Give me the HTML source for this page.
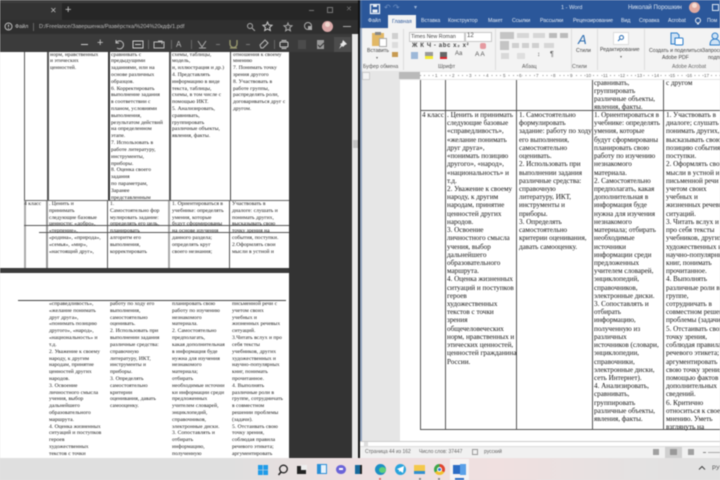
<!DOCTYPE html>
<html lang="ru"><head><meta charset="utf-8">
<style>
html,body{margin:0;padding:0;width:720px;height:480px;overflow:hidden;background:#e6e3e3}
*{box-sizing:border-box}
.a{position:absolute}
.t{position:absolute;white-space:nowrap;font-family:"Liberation Serif","Noto Serif CJK SC",serif;color:#222}
.l{font-size:5.6px;line-height:6.82px;color:#1c1c1c}
.w{font-size:7.15px;line-height:8.22px;color:#111}
.s{position:absolute;white-space:nowrap;font-family:"Liberation Sans","Noto Sans CJK SC",sans-serif}
.tab{font-size:5.2px;top:17.5px;color:#e6ecf5}
.rb{font-size:5.2px;color:#444}
.r{position:absolute;top:73px;font:4.6px "Liberation Sans",sans-serif;color:#666}
.vl{position:absolute;background:#555}
#root{position:absolute;left:0;top:0;width:720px;height:480px;overflow:hidden;filter:blur(.42px)}
</style></head><body><div id="root">

<!-- LEFT: PDF viewer -->
<div class="a" style="left:0;top:0;width:360px;height:458px;background:#333"></div>
<div class="a" style="left:0;top:0;width:360px;height:3px;background:#3d3d3d"></div>
<div class="a" style="left:0;top:3px;width:360px;height:17px;background:#262626"></div>
<div class="a" style="left:0;top:20px;width:360px;height:14px;background:#2f2f2f"></div>
<div class="a" style="left:0;top:34px;width:360px;height:18px;background:#3b3b3b"></div>
<div class="a" style="left:0;top:3px;width:62px;height:17px;background:#333"></div>
<div class="s" style="left:50px;top:6px;font-size:8px;color:#bbb">✕</div>
<div class="s" style="left:65px;top:4px;font-size:11px;color:#ccc">+</div>
<div class="a" style="left:309px;top:10px;width:5px;height:1px;background:#777"></div>
<div class="a" style="left:327px;top:7px;width:6px;height:6px;border:1px solid #777"></div>
<div class="s" style="left:346px;top:5px;font-size:7px;color:#777">✕</div>
<svg class="a" style="left:4px;top:22px" width="9" height="9"><circle cx="4.5" cy="4.5" r="3.5" fill="none" stroke="#bbb"/><path d="M4.5 2.5v2.5M4.5 6v1" stroke="#bbb"/></svg>
<div class="s" style="left:15px;top:23.5px;font-size:5.4px;color:#ccc">Файл</div>
<div class="a" style="left:33px;top:23px;width:1px;height:8px;background:#666"></div>
<div class="s" style="left:39px;top:23.5px;font-size:5.5px;color:#bbb">D:/Freelance/Завершенка/Развёрстка/%204%20кдф/1.pdf</div>
<svg class="a" style="left:246px;top:22px" width="10" height="9"><circle cx="4" cy="4" r="2.5" fill="none" stroke="#aaa"/><path d="M6 6l3 3" stroke="#aaa"/></svg>
<svg class="a" style="left:262px;top:21px" width="11" height="11"><path d="M5.500 1l1.300 3 3.200.3-2.400 2.100.7 3.100-2.800-1.600-2.800 1.600.7-3.100L1 4.300 4.200 4z" fill="none" stroke="#ccc"/></svg>
<svg class="a" style="left:283px;top:21px" width="11" height="11"><path d="M5 2l1 2.500 3 .3-2.300 2 .7 3L5 8.300 2.600 9.800l.7-3-2.300-2 3-.3z" fill="none" stroke="#aaa"/></svg>
<svg class="a" style="left:303px;top:21px" width="11" height="11"><circle cx="5" cy="5" r="3.500" fill="none" stroke="#aaa"/><rect x="5" y="5" width="4" height="4" fill="#aaa"/></svg>
<div class="a" style="left:322px;top:21px;width:11px;height:11px;border-radius:50%;background:#d9a8a8"></div>
<div class="a" style="left:325px;top:22px;width:5px;height:5px;border-radius:50%;background:#f0d8d0"></div>
<div class="a" style="left:343px;top:26px;width:8px;height:1px;background:#aaa"></div>

<div class="a" style="left:81px;top:44px;width:7px;height:1px;background:#ccc"></div>
<div class="s" style="left:97px;top:37px;font-size:11px;color:#ccc">+</div>
<svg class="a" style="left:114px;top:39px" width="11" height="11"><path d="M2 4a4 4 0 1 1 1 5M2 1v3h3" fill="none" stroke="#bbb"/></svg>
<svg class="a" style="left:132px;top:40px" width="12" height="9"><rect x="1" y="1" width="10" height="7" fill="none" stroke="#ccc"/><path d="M3 4.500h6" stroke="#ccc"/></svg>
<div class="a" style="left:148px;top:40px;width:1px;height:9px;background:#666"></div>
<svg class="a" style="left:153px;top:40px" width="12" height="9"><rect x="1" y="2" width="10" height="6" fill="none" stroke="#bbb"/><path d="M5 1h4v3" fill="none" stroke="#bbb"/></svg>
<div class="a" style="left:171px;top:40px;width:1px;height:9px;background:#666"></div>
<div class="s" style="left:176px;top:40px;font-size:8px;color:#bbb">A</div>
<div class="a" style="left:191px;top:40px;width:1px;height:9px;background:#666"></div>
<svg class="a" style="left:197px;top:39px" width="11" height="11"><path d="M1 2l4 6 4-6M2 9h7" fill="none" stroke="#aaa"/></svg>
<div class="a" style="left:216px;top:44px;width:4px;height:1px;background:#777"></div>
<svg class="a" style="left:228px;top:39px" width="11" height="11"><path d="M2 1v4a3.500 3.500 0 0 0 7 0V1M2 9h7" fill="none" stroke="#9a9a70" stroke-width="1.300"/></svg>
<div class="a" style="left:246px;top:44px;width:4px;height:1px;background:#777"></div>
<svg class="a" style="left:258px;top:38px" width="12" height="12"><path d="M2 7l5-5 3 3-5 5H3z" fill="none" stroke="#bbb"/></svg>
<div class="a" style="left:274px;top:40px;width:1px;height:9px;background:#666"></div>
<svg class="a" style="left:278px;top:39px" width="12" height="11"><rect x="2" y="3" width="8" height="5" rx="1" fill="none" stroke="#ccc"/><path d="M3.500 1.500h5M3.500 9.500h5" stroke="#ccc"/></svg>
<div class="a" style="left:298px;top:40px;width:8px;height:9px;background:#4b4b4b"></div>
<svg class="a" style="left:315px;top:39px" width="11" height="11"><rect x="2" y="1" width="7" height="9" fill="#999"/><path d="M3 6l2 2 4-4" stroke="#333" fill="none"/></svg>
<div class="a" style="left:334px;top:37px;width:17px;height:15px;background:#4c4c4c"></div>
<svg class="a" style="left:337px;top:39px" width="11" height="11"><path d="M6 1l4 4-2 1-2 2-1-1-3 3 2-4-1-1 2-1z" fill="#e8e8e8"/></svg>

<!-- pdf page -->
<div class="a" style="left:0;top:52px;width:289px;height:216px;background:#fff"></div>
<div class="a" style="left:0;top:268px;width:289px;height:5px;background:#3a3a3a"></div>
<div class="a" style="left:0;top:273px;width:289px;height:185px;background:#fff"></div>
<div class="a" style="left:352px;top:34px;width:6px;height:424px;background:#e9e9e9"></div>
<div class="a" style="left:353px;top:140px;width:5px;height:8px;background:#c4c4c4"></div>
<div class="a" style="left:358px;top:0;width:2px;height:458px;background:#111"></div>

<div class="vl" style="left:24px;top:52px;width:1px;height:216px;background:#555"></div>
<div class="vl" style="left:24px;top:200px;width:2px;height:68px;background:#aaa"></div>
<div class="vl" style="left:47px;top:52px;width:2px;height:148px;background:#555"></div>
<div class="vl" style="left:46px;top:200px;width:2px;height:68px;background:#999"></div>
<div class="vl" style="left:108px;top:52px;width:2px;height:148px;background:#333"></div>
<div class="vl" style="left:107px;top:200px;width:1px;height:68px;background:#555"></div>
<div class="vl" style="left:169px;top:52px;width:2px;height:148px;background:#555"></div>
<div class="vl" style="left:168px;top:200px;width:2px;height:68px;background:#aaa"></div>
<div class="vl" style="left:230px;top:52px;width:1px;height:148px;background:#444"></div>
<div class="vl" style="left:229px;top:200px;width:1px;height:68px;background:#555"></div>
<div class="vl" style="left:24px;top:200px;width:265px;height:1px;background:#666"></div>
<div class="vl" style="left:24px;top:225px;width:265px;height:1px;background:#555"></div>
<div class="vl" style="left:39px;top:232px;width:250px;height:1px;background:#555"></div>
<div class="vl" style="left:18px;top:300px;width:268px;height:1px;background:#444"></div>

<div class="t l" style="left:50px;top:51.5px;clip-path:inset(.5px 0 0 0)">норм, нравственных<br>и этических<br>ценностей.</div>
<div class="t l" style="left:111px;top:51.5px;clip-path:inset(.5px 0 0 0)">сравнивать с<br>предыдущими<br>заданиями, или на<br>основе различных<br>образцов.<br>6. Корректировать<br>выполнение задания<br>в соответствии с<br>планом, условиями<br>выполнения,<br>результатом действий<br>на определенном<br>этапе.<br>7. Использовать в<br>работе литературу,<br>инструменты,<br>приборы.<br>8. Оценка своего<br>задания<br>по параметрам,<br>Заранее<br>представленным</div>
<div class="t l" style="left:172px;top:51.5px;clip-path:inset(.5px 0 0 0)">схемы, таблицы,<br>модель,<br>и, иллюстрация и др.)<br>4. Представлять<br>информацию в виде<br>текста, таблицы,<br>схемы, в том числе с<br>помощью ИКТ.<br>5. Анализировать,<br>сравнивать,<br>группировать<br>различные объекты,<br>явления, факты.</div>
<div class="t l" style="left:233px;top:51.5px;clip-path:inset(.5px 0 0 0)">отношения к своему<br>мнению<br>7. Понимать точку<br>зрения другого<br>8. Участвовать в<br>работе группы,<br>распределять роли,<br>договариваться друг с<br>другом.</div>

<div class="t l" style="left:24px;top:201px">4 класс</div>
<div class="t l" style="left:49px;top:201px">. Ценить и<br>принимать<br>следующие базовые<br>ценности: «добро»,<br>«терпение»,<br>«родина», «природа»,<br>«семья», «мир»,<br>«настоящий друг»,</div>
<div class="t l" style="left:110px;top:201px">1.<br>Самостоятельно фор<br>мулировать задание:<br>определять его цель,<br>планировать<br>алгоритм его<br>выполнения,<br>корректировать</div>
<div class="t l" style="left:172px;top:201px">1. Ориентироваться в<br>учебнике: определять<br>умения, которые<br>будут сформированы<br>на основе изучения<br>данного раздела;<br>определять круг<br>своего незнания;</div>
<div class="t l" style="left:232px;top:201px">Участвовать в<br>диалоге: слушать и<br>понимать других,<br>высказывать свою<br>точку зрения на<br>события, поступки.<br>2.Оформлять свои<br>мысли в устной и</div>

<div class="t l" style="left:49px;top:301px">«справедливость»,<br>«желание понимать<br>друг друга»,<br>«понимать позицию<br>другого», «народ»,<br>«национальность» и<br>т.д.<br>2. Уважение к своему<br>народу, к другим<br>народам, принятие<br>ценностей других<br>народов.<br>3. Освоение<br>личностного смысла<br>учения, выбор<br>дальнейшего<br>образовательного<br>маршрута.<br>4. Оценка жизненных<br>ситуаций и поступков<br>героев<br>художественных<br>текстов с точки</div>
<div class="t l" style="left:110px;top:301px">работу по ходу его<br>выполнения,<br>самостоятельно<br>оценивать.<br>2. Использовать при<br>выполнении задания<br>различные средства:<br>справочную<br>литературу, ИКТ,<br>инструменты и<br>приборы.<br>3. Определять<br>самостоятельно<br>критерии<br>оценивания, давать<br>самооценку.</div>
<div class="t l" style="left:172px;top:301px">планировать свою<br>работу по изучению<br>незнакомого<br>материала.<br>2. Самостоятельно<br>предполагать,<br>какая дополнительная<br>в информация буде<br>нужна для изучения<br>незнакомого<br>материала;<br>отбирать<br>необходимые источни<br>ки информации среди<br>предложенных<br>учителем словарей,<br>энциклопедий,<br>справочников,<br>электронные диски.<br>3. Сопоставлять и<br>отбирать<br>информацию,<br>полученную</div>
<div class="t l" style="left:232px;top:301px">письменной речи с<br>учетом своих<br>учебных и<br>жизненных речевых<br>ситуаций.<br>3.Читать вслух и про<br>себя тексты<br>учебников, других<br>художественных и<br>научно-популярных<br>книг, понимать<br>прочитанное.<br>4. Выполнять<br>различные роли в<br>группе, сотрудничать<br>в совместном<br>решении проблемы<br>(задачи).<br>5. Отстаивать свою<br>точку зрения,<br>соблюдая правила<br>речевого этикета;<br>аргументировать</div>

<!-- RIGHT: Word -->
<div class="a" style="left:360px;top:0;width:360px;height:28px;background:#2b579a"></div>
<svg class="a" style="left:369px;top:3px" width="12" height="12"><rect x="1.500" y="1.500" width="9" height="9" fill="none" stroke="#e8eef6" stroke-width="1.300"/><rect x="3.500" y="6.500" width="5" height="3" fill="#e8eef6"/><rect x="4" y="2" width="4" height="2" fill="#e8eef6"/></svg>
<div class="s" style="left:384px;top:3px;font-size:8px;color:#6f8fc0">↶ ↷</div>
<div class="s" style="left:414px;top:4px;font-size:6px;color:#9fb6d8">▾</div>
<div class="s" style="left:561px;top:4.500px;font-size:5.600px;color:#dde6f2">1 - Word</div>
<div class="s" style="left:628px;top:4.500px;font-size:6px;color:#dde6f2">Николай Порошкин</div>
<div class="a" style="left:689px;top:2px;width:11px;height:11px;border-radius:50%;background:#e0a9a0"></div>
<div class="a" style="left:692px;top:3px;width:5px;height:5px;border-radius:50%;background:#f5dcd3"></div>
<div class="a" style="left:712px;top:4px;width:7px;height:7px;border:1px solid #dde6f2"></div>

<div class="a" style="left:388px;top:15px;width:28px;height:14px;background:#f3f3f3"></div>
<div class="s tab" style="left:368px">Файл</div>
<div class="s tab" style="left:392px;top:18.500px;color:#2b579a">Главная</div>
<div class="s tab" style="left:421px">Вставка</div>
<div class="s tab" style="left:448px">Конструктор</div>
<div class="s tab" style="left:488px">Макет</div>
<div class="s tab" style="left:512px">Ссылки</div>
<div class="s tab" style="left:540px">Рассылки</div>
<div class="s tab" style="left:573px">Рецензирование</div>
<div class="s tab" style="left:621px">Вид</div>
<div class="s tab" style="left:639px">Справка</div>
<div class="s tab" style="left:668px">Acrobat</div>
<svg class="a" style="left:694px;top:17px" width="8" height="10"><circle cx="4" cy="3.500" r="2.500" fill="none" stroke="#e6ecf5"/><path d="M3 7h2" stroke="#e6ecf5"/></svg>
<div class="s tab" style="left:707px">Пом</div>

<div class="a" style="left:360px;top:29px;width:360px;height:42px;background:#f3f3f3"></div>
<div class="a" style="left:360px;top:71px;width:360px;height:9px;background:#e6e6e6"></div>

<!-- paste -->
<div class="a" style="left:372px;top:33px;width:12px;height:13px;background:#e2b866"></div>
<div class="a" style="left:375px;top:32px;width:6px;height:3px;background:#888"></div>
<div class="a" style="left:379px;top:38px;width:8px;height:9px;background:#fff;border:1px solid #aaa"></div>
<div class="s rb" style="left:367px;top:48px">Вставить</div>
<div class="s" style="left:376px;top:55px;font-size:4px;color:#666">▾</div>
<div class="s rb" style="left:363px;top:63.500px;color:#555">Буфер обмена</div>
<div class="a" style="left:392px;top:33px;width:6px;height:6px;background:#cfcfcf"></div>
<div class="a" style="left:392px;top:42px;width:6px;height:6px;background:#dcdcdc"></div>
<div class="a" style="left:392px;top:52px;width:6px;height:5px;background:#c79b52"></div>
<div class="a" style="left:403px;top:29px;width:1px;height:41px;background:#dcdcdc"></div>

<div class="a" style="left:409px;top:32px;width:56px;height:10px;background:#fff;border:1px solid #c8c8c8"></div>
<div class="s" style="left:411px;top:33.500px;font-size:5.300px;color:#444">Times New Roman</div>
<div class="a" style="left:465px;top:32px;width:27px;height:10px;background:#fff;border:1px solid #c8c8c8"></div>
<div class="s" style="left:467px;top:33px;font-size:6px;color:#444">12</div>
<div class="s" style="left:412px;top:43px;font-size:6px;letter-spacing:.6px;font-weight:bold;color:#444">Ж К Ч - abc x₂ x²</div>
<div class="a" style="left:480px;top:43px;width:6px;height:6px;background:#e59aa0;border-radius:2px"></div>
<div class="a" style="left:411px;top:52px;width:7px;height:7px;background:#9db8d8"></div>
<div class="a" style="left:425px;top:52px;width:8px;height:4px;background:#999"></div>
<div class="a" style="left:425px;top:56px;width:8px;height:3px;background:#f5ea30"></div>
<div class="a" style="left:440px;top:52px;width:7px;height:5px;background:#666"></div>
<div class="a" style="left:440px;top:57px;width:7px;height:2px;background:#d9262c"></div>
<div class="s" style="left:455px;top:51px;font-size:6px;color:#555">Aa</div>
<div class="s" style="left:475px;top:51px;font-size:6.500px;color:#555">A A</div>
<div class="s rb" style="left:438px;top:63.500px;color:#555">Шрифт</div>
<div class="a" style="left:495px;top:29px;width:1px;height:41px;background:#dcdcdc"></div>

<div class="a" style="left:500px;top:32px;width:14px;height:7px;background:#c4c4c4"></div>
<div class="a" style="left:517px;top:33px;width:12px;height:5px;background:#d6d6d6"></div>
<div class="a" style="left:533px;top:33px;width:12px;height:5px;background:#d6d6d6"></div>
<div class="a" style="left:549px;top:33px;width:8px;height:5px;background:#bbb"></div>
<div class="a" style="left:560px;top:33px;width:8px;height:5px;background:#bbb"></div>
<div class="a" style="left:500px;top:41px;width:9px;height:9px;background:#c4c4c4"></div>
<div class="a" style="left:512px;top:43px;width:7px;height:5px;background:#cfcfcf"></div>
<div class="a" style="left:522px;top:43px;width:7px;height:5px;background:#cfcfcf"></div>
<div class="a" style="left:532px;top:43px;width:7px;height:5px;background:#cfcfcf"></div>
<div class="a" style="left:544px;top:43px;width:10px;height:5px;background:#d6d6d6"></div>
<div class="a" style="left:501px;top:53px;width:8px;height:6px;background:#d8d8d8"></div>
<div class="a" style="left:517px;top:53px;width:8px;height:6px;background:#dedede"></div>
<div class="s" style="left:537px;top:51px;font-size:6.500px;color:#555">↕</div>
<div class="s" style="left:550px;top:51px;font-size:7px;color:#555">¶</div>
<div class="s rb" style="left:522px;top:63.500px;color:#555">Абзац</div>
<div class="a" style="left:571px;top:29px;width:1px;height:41px;background:#dcdcdc"></div>

<div class="s" style="left:578px;top:32px;font-size:13px;color:#2b6cb0;font-style:italic">A</div>
<div class="s rb" style="left:576px;top:48px">Стили</div>
<div class="s rb" style="left:572px;top:63.500px;color:#555">Стили</div>
<div class="a" style="left:597px;top:29px;width:1px;height:41px;background:#dcdcdc"></div>
<div class="a" style="left:613px;top:32px;width:16px;height:13px;background:#fff;border:1px solid #ddd"></div>
<svg class="a" style="left:617px;top:34px" width="8" height="8"><circle cx="4.500" cy="3.500" r="2" fill="none" stroke="#2b6cb0"/><path d="M3 5L1 7" stroke="#2b6cb0"/></svg>
<div class="s rb" style="left:600px;top:47px">Редактирование</div>
<div class="s" style="left:620px;top:54px;font-size:4px;color:#666">▾</div>
<div class="a" style="left:644px;top:29px;width:1px;height:41px;background:#dcdcdc"></div>
<svg class="a" style="left:669px;top:32px" width="16" height="14"><path d="M2 1h6l2 2v3H6v6H2z" fill="#cfe3f5" stroke="#2b7cc9"/><rect x="6" y="6" width="8" height="7" rx="1" fill="#fff" stroke="#2b7cc9"/></svg>
<div class="s rb" style="left:649px;top:48px">Создать и поделиться</div>
<div class="s rb" style="left:662px;top:55px">Adobe PDF</div>
<div class="s rb" style="left:672px;top:64px;color:#666">Adobe Acrobat</div>
<svg class="a" style="left:709px;top:32px" width="11" height="14"><circle cx="6" cy="4" r="3" fill="#cfe3f5" stroke="#2b7cc9"/><path d="M1 13c0-4 2-6 5-6s5 2 5 6z" fill="#cfe3f5" stroke="#2b7cc9"/></svg>
<div class="s rb" style="left:702px;top:48px">Запросить</div>
<div class="s rb" style="left:708px;top:55px">подписи</div>

<!-- ruler -->
<div class="a" style="left:362px;top:72px;width:8px;height:8px;background:#f4f4f4;border:1px solid #ccc"></div>
<div class="a" style="left:400px;top:72px;width:320px;height:7px;background:#fff"></div>
<div class="a" style="left:399px;top:72px;width:21px;height:7px;background:#b9b9b9"></div>
<div class="a" style="left:420px;top:75px;width:300px;height:1px;background:repeating-linear-gradient(90deg,#999 0,#999 1px,transparent 1px,transparent 4.22px)"></div>
<div class="r" style="left:435px;background:#fff">1</div><div class="r" style="left:452px;background:#fff">2</div><div class="r" style="left:469px;background:#fff">3</div><div class="r" style="left:486px;background:#fff">4</div><div class="r" style="left:503px;background:#fff">5</div><div class="r" style="left:519px;background:#fff">6</div><div class="r" style="left:536px;background:#fff">7</div><div class="r" style="left:553px;background:#fff">8</div><div class="r" style="left:570px;background:#fff">9</div><div class="r" style="left:586px;background:#fff">10</div><div class="r" style="left:603px;background:#fff">11</div><div class="r" style="left:620px;background:#fff">12</div><div class="r" style="left:637px;background:#fff">13</div><div class="r" style="left:654px;background:#fff">14</div><div class="r" style="left:670px;background:#fff">15</div><div class="r" style="left:687px;background:#fff">16</div><div class="r" style="left:704px;background:#fff">17</div>

<!-- doc area -->
<div class="a" style="left:360px;top:80px;width:360px;height:360px;background:#e6e6e6"></div>
<div class="a" style="left:360px;top:0;width:2px;height:458px;background:#4e6f9e;opacity:.55"></div>
<div class="a" style="left:400px;top:80px;width:320px;height:361px;background:#fff"></div>

<div class="vl" style="left:420px;top:80px;width:1px;height:349px"></div>
<div class="vl" style="left:445px;top:80px;width:1px;height:349px"></div>
<div class="vl" style="left:516px;top:80px;width:1px;height:349px"></div>
<div class="vl" style="left:592px;top:80px;width:1px;height:349px"></div>
<div class="vl" style="left:663px;top:80px;width:1px;height:349px"></div>
<div class="vl" style="left:420px;top:110px;width:300px;height:1px"></div>
<div class="vl" style="left:420px;top:429px;width:300px;height:1px"></div>

<div class="t w" style="left:594px;top:78.500px">сравнивать,<br>группировать<br>различные объекты,<br>явления, факты.</div>
<div class="t w" style="left:666px;top:78.500px">с другом</div>

<div class="t w" style="left:422px;top:111px">4 класс</div>
<div class="t w" style="left:447px;top:111px">. Ценить и принимать<br>следующие базовые<br>«справедливость»,<br>«желание понимать<br>друг друга»,<br>«понимать позицию<br>другого», «народ»,<br>«национальность» и<br>т.д.<br>2. Уважение к своему<br>народу, к другим<br>народам, принятие<br>ценностей других<br>народов.<br>3. Освоение<br>личностного смысла<br>учения, выбор<br>дальнейшего<br>образовательного<br>маршрута.<br>4. Оценка жизненных<br>ситуаций и поступков<br>героев<br>художественных<br>текстов с точки<br>зрения<br>общечеловеческих<br>норм, нравственных и<br>этических ценностей,<br>ценностей гражданина<br>России.</div>
<div class="t w" style="left:519px;top:111px">1. Самостоятельно<br>формулировать<br>задание: работу по ходу<br>его выполнения,<br>самостоятельно<br>оценивать.<br>2. Использовать при<br>выполнении задания<br>различные средства:<br>справочную<br>литературу, ИКТ,<br>инструменты и<br>приборы.<br>3. Определять<br>самостоятельно<br>критерии оценивания,<br>давать самооценку.</div>
<div class="t w" style="left:594px;top:111px">1. Ориентироваться в<br>учебнике: определять<br>умения, которые<br>будут сформированы<br>планировать свою<br>работу по изучению<br>незнакомого<br>материала.<br>2. Самостоятельно<br>предполагать, какая<br>дополнительная в<br>информация буде<br>нужна для изучения<br>незнакомого<br>материала; отбирать<br>необходимые<br>источники<br>информации среди<br>предложенных<br>учителем словарей,<br>энциклопедий,<br>справочников,<br>электронные диски.<br>3. Сопоставлять и<br>отбирать<br>информацию,<br>полученную из<br>различных<br>источников (словари,<br>энциклопедии,<br>справочники,<br>электронные диски,<br>сеть Интернет).<br>4. Анализировать,<br>сравнивать,<br>группировать<br>различные объекты,<br>явления, факты.</div>
<div class="t w" style="left:666px;top:111px">1. Участвовать в<br>диалоге; слушать и<br>понимать других,<br>высказывать свою<br>позицию события,<br>поступки.<br>2. Оформлять свои<br>мысли в устной и<br>письменной речи с<br>учетом своих<br>учебных и<br>жизненных речевых<br>ситуаций.<br>3. Читать вслух и<br>про себя тексты<br>учебников, других<br>художественных и<br>научно-популярных<br>книг, понимать<br>прочитанное.<br>4. Выполнять<br>различные роли в<br>группе,<br>сотрудничать в<br>совместном решении<br>проблемы (задачи).<br>5. Отстаивать свою<br>точку зрения,<br>соблюдая правила<br>речевого этикета;<br>аргументировать<br>свою точку зрения<br>помощью фактов и<br>дополнительных<br>сведений.<br>6. Критично<br>относиться к своему<br>мнению. Уметь<br>взглянуть на</div>

<!-- Word bottom -->
<div class="a" style="left:360px;top:441px;width:360px;height:6px;background:#fff;border-top:1px solid #ccc;border-bottom:1px solid #ddd"></div>
<div class="a" style="left:360px;top:447px;width:360px;height:11px;background:#f1f1f1"></div>
<div class="a" style="left:364px;top:442px;width:4px;height:4px;background:#ddd"></div>
<div class="s" style="left:365px;top:449px;font-size:5px;color:#666">Страница 44 из 162</div>
<div class="s" style="left:419px;top:449px;font-size:5px;color:#666">Число слов: 37447</div>
<div class="a" style="left:472px;top:449px;width:6px;height:6px;border:1px solid #999"></div>
<div class="s" style="left:484px;top:449px;font-size:5px;color:#666">русский</div>
<div class="a" style="left:653px;top:449px;width:6px;height:6px;background:#a0a0a0"></div>
<div class="a" style="left:665px;top:447px;width:17px;height:11px;background:#d0d0d0"></div>
<div class="a" style="left:670px;top:449px;width:7px;height:6px;background:#999"></div>
<div class="a" style="left:688px;top:449px;width:6px;height:6px;background:#a0a0a0"></div>
<div class="a" style="left:703px;top:452px;width:3px;height:1px;background:#888"></div>
<div class="a" style="left:708px;top:452px;width:12px;height:1px;background:#aaa"></div>

<!-- Taskbar -->
<div class="a" style="left:0;top:458px;width:720px;height:22px;background:linear-gradient(90deg,#dfdfdf 0,#dfdfdf 230px,#eddfe0 340px,#f0e0e0 500px,#e4e2e2 640px,#e1e1e1 720px)"></div>
<svg class="a" style="left:257px;top:464px" width="12" height="12"><path d="M1 1h4.700v4.700H1zM6.300 1H11v4.700H6.300zM1 6.300h4.700V11H1zM6.300 6.300H11V11H6.300z" fill="#1e9be8"/></svg>
<svg class="a" style="left:277px;top:464px" width="12" height="12"><circle cx="6.500" cy="5" r="3.800" fill="none" stroke="#222" stroke-width="1.300"/><path d="M4 8L1.500 11" stroke="#222" stroke-width="1.500"/></svg>
<div class="a" style="left:297px;top:466px;width:9px;height:8px;background:#222"></div>
<div class="a" style="left:301px;top:465px;width:6px;height:5px;background:#eee"></div>
<div class="a" style="left:317px;top:464px;width:10px;height:10px;background:#2a8fd6"></div>
<div class="a" style="left:321px;top:465px;width:5px;height:8px;background:#e8f3fb"></div>
<div class="a" style="left:336px;top:465px;width:10px;height:9px;border-radius:5px;background:#6a63d8"></div>
<div class="a" style="left:339px;top:468px;width:4px;height:2px;background:#fff"></div>
<div class="a" style="left:355px;top:465px;width:6px;height:9px;background:#176a9c"></div>
<div class="a" style="left:360px;top:465px;width:2px;height:9px;background:#222"></div>
<div class="a" style="left:375px;top:464px;width:11px;height:11px;border-radius:50%;background:#1b8fc4"></div>
<div class="a" style="left:379px;top:467px;width:7px;height:6px;border-radius:50%;background:#5fcf7a"></div>
<div class="a" style="left:395px;top:464px;width:11px;height:11px;border-radius:50%;background:#2aa3dc"></div>
<svg class="a" style="left:397px;top:466px" width="7" height="7"><path d="M0 3l7-3-1 7-3-2-1 1V4z" fill="#fff"/></svg>
<div class="a" style="left:414px;top:465px;width:11px;height:9px;background:#f4c84a"></div>
<div class="a" style="left:414px;top:471px;width:11px;height:3px;background:#2f8fd0"></div>
<div class="a" style="left:434px;top:464px;width:11px;height:11px;border-radius:50%;background:conic-gradient(#e0442f 0 33%,#f2c02c 33% 66%,#3da64a 66%)"></div>
<div class="a" style="left:437px;top:467px;width:5px;height:5px;border-radius:50%;background:#2d7fd8;border:1px solid #fff"></div>
<div class="a" style="left:450px;top:459px;width:19px;height:21px;background:#f6f3f3"></div>
<div class="a" style="left:453px;top:465px;width:11px;height:9px;background:#2b6cc4"></div>
<div class="a" style="left:460px;top:464px;width:6px;height:11px;background:#5aa0e8"></div>
<div class="a" style="left:455px;top:478px;width:9px;height:1.500px;background:#2b6cc4"></div>
<div class="a" style="left:379px;top:478px;width:2px;height:1.500px;background:#e07070"></div>
<div class="a" style="left:419px;top:478px;width:2px;height:1.500px;background:#888"></div>
<div class="a" style="left:438px;top:478px;width:2px;height:1.500px;background:#888"></div>
<svg class="a" style="left:698px;top:465px" width="8" height="6"><path d="M1 4.500l3-3 3 3" fill="none" stroke="#444"/></svg>
<div class="s" style="left:712px;top:466px;font-size:6px;color:#555">РУС</div>
</div></body></html>
